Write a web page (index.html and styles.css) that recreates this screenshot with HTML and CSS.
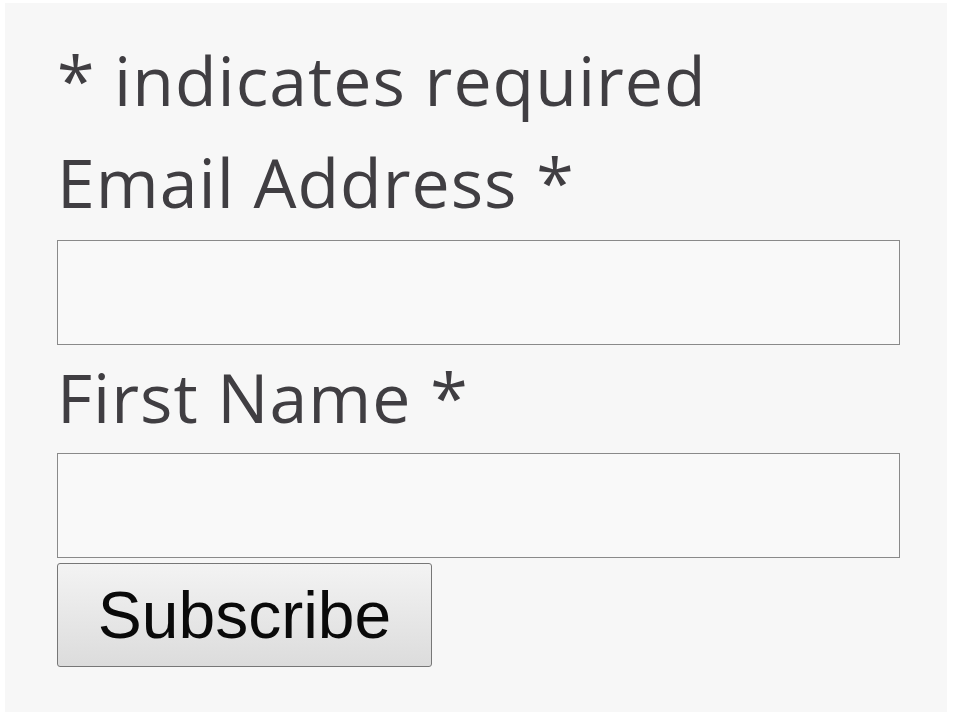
FILE: index.html
```html
<!DOCTYPE html>
<html lang="en">
<head>
    <meta charset="UTF-8">
    <meta name="viewport" content="width=device-width, initial-scale=1.0">
    <title>Subscribe</title>
    <link rel="stylesheet" href="styles.css">
</head>
<body>
    <div class="container">
        <form action="#" method="POST">
            <p class="indicates-required">* indicates required</p>

            <label for="email">Email Address *</label>
            <input type="email" id="email" name="email" class="field" required>

            <label for="fname" class="label-next">First Name *</label>
            <input type="text" id="fname" name="fname" class="field field-next" required>

            <button type="submit" class="btn">Subscribe</button>
        </form>
    </div>
</body>
</html>
```

FILE: styles.css
```css
/* General Reset */
* {
    margin: 0;
    padding: 0;
    box-sizing: border-box;
}

body {
    background: #fff;
    font-family: 'Open Sans', sans-serif;
    color: #403e42;
}

.container {
    margin: 3px 11px 0 5px;
    height: 709px;
    background: #f7f7f7;
    padding: 26px 0 0 52px;
}

.indicates-required,
label {
    display: block;
    font-size: 68px;
    line-height: 102px;
    letter-spacing: 1px;
}

.field {
    display: block;
    width: 843px;
    height: 105px;
    margin-top: 7px;
    background: #f9f9f9;
    border: 1px solid #8a8a8a;
}

.label-next {
    margin-top: 1px;
}

.field-next {
    margin-top: 5px;
}

.btn {
    display: block;
    width: 375px;
    height: 104px;
    margin-top: 5px;
    font-family: 'Liberation Sans', Arial, sans-serif;
    font-size: 66px;
    color: #0a0a0a;
    background: linear-gradient(#f3f3f3, #dcdcdc);
    border: 1px solid #777;
    border-radius: 3px;
}
```
